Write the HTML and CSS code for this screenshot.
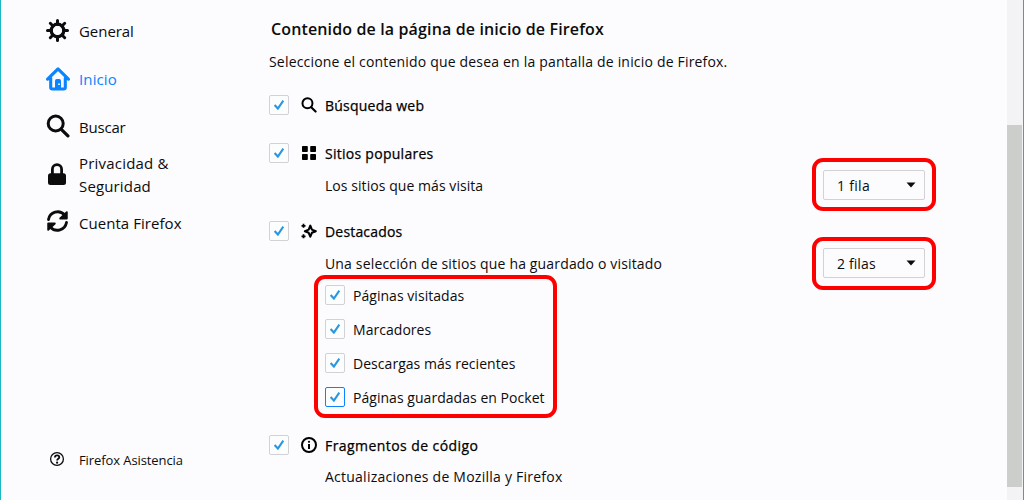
FILE: index.html
```
<!DOCTYPE html>
<html lang="es">
<head>
<meta charset="utf-8">
<title>Preferencias</title>
<link rel="stylesheet" href="styles.css">
</head>
<body>
<svg class="defs" width="0" height="0" aria-hidden="true">
  <symbol id="check" viewBox="0 0 18 18"><path d="M4.600 9 7.900 12.500 13.300 4.700" fill="none" stroke="#2996df" stroke-width="2.100"/></symbol>
  <symbol id="search" viewBox="0 0 24 24"><circle cx="9.700" cy="9.500" r="7.500" fill="none" stroke="currentColor" stroke-width="3"/><path d="m15.300 15.300 6.600 6.600" stroke="currentColor" stroke-width="3.200" stroke-linecap="round"/></symbol>
</svg>
<div class="window">
  <nav class="sidebar">
    <a class="item"><svg class="nav-icon" viewBox="0 0 24 24"><circle cx="11.500" cy="11.500" r="6.300" fill="none" stroke="currentColor" stroke-width="3.200"/><path d="M11.500 1.500v4M11.500 17.500v4M1.500 11.500h4M17.500 11.500h4M4.300 4.300l2.700 2.700M16 16l2.700 2.700M4.300 18.700 7 16M16 7l2.700-2.700" stroke="currentColor" stroke-width="3" stroke-linecap="round"/></svg><span class="general">General</span></a>
    <a class="item active"><svg class="nav-icon" viewBox="0 0 24 24"><path d="M1.600 12.200 12 1.900l10.400 10.300M4.700 11v9.300q0 1.700 1.700 1.700h11.200q1.700 0 1.700-1.700V11" fill="none" stroke="currentColor" stroke-width="3.100" stroke-linecap="round" stroke-linejoin="round"/><path d="M9 22v-8.200q0-1.800 1.800-1.800h2.400q1.800 0 1.800 1.800V22z" fill="currentColor"/><circle cx="13" cy="17.200" r=".9" fill="#fcfbfe"/></svg><span class="inicio">Inicio</span></a>
    <a class="item"><svg class="nav-icon search-icon"><use href="#search"/></svg><span class="buscar">Buscar</span></a>
    <a class="item tall"><svg class="nav-icon" viewBox="0 0 24 24"><rect x="2" y="10.300" width="18" height="11.700" rx="2.500" fill="currentColor"/><path d="M6.400 12V6.200a4.600 4.600 0 0 1 9.200 0V12" fill="none" stroke="currentColor" stroke-width="2.800"/></svg><span><span class="privacidad">Privacidad &amp;</span><br><span class="seguridad">Seguridad</span></span></a>
    <a class="item account"><svg class="nav-icon" viewBox="0 0 24 24"><path d="M2.500 10.500A9.300 9.300 0 0 1 18.500 5.800M20.500 13.500A9.300 9.300 0 0 1 4.500 18.200" fill="none" stroke="currentColor" stroke-width="2.800" stroke-linecap="round"/><path d="M20.800 3.200v6.300h-6.600zM2.200 20.800v-6.300h6.600z" fill="currentColor" stroke="currentColor" stroke-width="1.900" stroke-linejoin="round"/></svg><span class="cuenta">Cuenta Firefox</span></a>
    <a class="support"><svg class="help-icon" viewBox="0 0 16 16"><circle cx="8" cy="8" r="6.400" fill="none" stroke="currentColor" stroke-width="1.300"/><path d="M5.900 6.500c0-2.800 4.400-2.800 4.400-.3 0 1.500-2.200 1.600-2.200 3.200" fill="none" stroke="currentColor" stroke-width="1.800"/><circle cx="8.100" cy="11.700" r="1.100" fill="currentColor"/></svg><span class="asistencia">Firefox Asistencia</span></a>
  </nav>
  <main class="content">
    <h1 class="title">Contenido de la página de inicio de Firefox</h1>
    <p class="intro">Seleccione el contenido que desea en la pantalla de inicio de Firefox.</p>
    <div class="option web"><svg class="box"><use href="#check"/></svg><svg class="icon"><use href="#search"/></svg><span class="strong busqueda">Búsqueda web</span></div>
    <div class="option sites"><svg class="box"><use href="#check"/></svg><svg class="icon" viewBox="0 0 16 16"><path d="M1.800 1H6q.8 0 .8.8v4.400q0 .8-.8.8H1.800Q1 7 1 6.200V1.800Q1 1 1.800 1zM10 1h4.200q.8 0 .8.8v4.400q0 .8-.8.8H10q-.8 0-.8-.8V1.800Q9.200 1 10 1zM1.800 9H6q.8 0 .8.8v4.400q0 .8-.8.8H1.800q-.8 0-.8-.8V9.800Q1 9 1.800 9zM10 9h4.200q.8 0 .8.8v4.400q0 .8-.8.8H10q-.8 0-.8-.8V9.800Q9.200 9 10 9z" fill="currentColor"/></svg><span class="strong sitios">Sitios populares</span></div>
    <div class="detail"><span class="visita">Los sitios que más visita</span><div class="select"><span class="fila">1 fila</span><svg class="arrow" viewBox="0 0 10 6"><path d="M.5.5h9L5 5.500z" fill="currentColor"/></svg></div></div>
    <div class="option highlights"><svg class="box"><use href="#check"/></svg><svg class="icon" viewBox="0 0 16 16"><path d="M9.300 2.700 10.900 6.600 14.800 8.200 10.900 9.800 9.300 13.700 7.700 9.800 3.900 8.200 7.700 6.600z" fill="none" stroke="currentColor" stroke-width="2.100" stroke-linejoin="round"/><path d="M2.500.800v4M.500 2.800h4M2.500 11.300v4M.500 13.300h4" stroke="currentColor" stroke-width="1.700"/></svg><span class="strong destacados">Destacados</span></div>
    <div class="detail"><span class="seleccion">Una selección de sitios que ha guardado o visitado</span><div class="select"><span class="filas">2 filas</span><svg class="arrow" viewBox="0 0 10 6"><path d="M.5.5h9L5 5.500z" fill="currentColor"/></svg></div></div>
    <div class="suboptions">
      <div class="suboption"><svg class="box"><use href="#check"/></svg><span>Páginas visitadas</span></div>
      <div class="suboption"><svg class="box"><use href="#check"/></svg><span>Marcadores</span></div>
      <div class="suboption"><svg class="box"><use href="#check"/></svg><span>Descargas más recientes</span></div>
      <div class="suboption"><svg class="box focused"><use href="#check"/></svg><span>Páginas guardadas en Pocket</span></div>
    </div>
    <div class="option snippets"><svg class="box"><use href="#check"/></svg><svg class="icon" viewBox="0 0 16 16"><circle cx="8" cy="8" r="7" fill="none" stroke="currentColor" stroke-width="2"/><path d="M8 7v5" stroke="currentColor" stroke-width="2"/><circle cx="8" cy="4.800" r="1.100" fill="currentColor"/></svg><span class="strong fragmentos">Fragmentos de código</span></div>
    <div class="detail last"><span class="actualizaciones">Actualizaciones de Mozilla y Firefox</span></div>
  </main>
  <div class="scrollbar"><div class="thumb"></div></div>
</div>
</body>
</html>
```
FILE: styles.css
```
*, *::after { box-sizing: border-box; }
body { margin: 0; background: #fcfbfe; color: #0c0c0d; font: 14px/22px "Open Sans", "Noto Sans", sans-serif; }
.defs { display: block; }
.window { display: flex; height: 500px; border-left: 1px solid #1ab8c4; border-right: 1px solid #35a9b1; overflow: hidden; }
span { white-space: nowrap; }
.sidebar { width: 268px; padding: 7px 0 0 45px; flex: none; }
.item { display: flex; align-items: center; gap: 9px; height: 48px; font-size: 15px; }
.item.active { color: #0a84ff; }
.item.tall { line-height: 23px; }
.item.account { height: 47px; }
.nav-icon { width: 24px; height: 24px; flex: none; }
.account .nav-icon { margin-bottom: 4px; }
.search-icon { margin-bottom: 2px; }
.general { letter-spacing: -.05px; }
.inicio { letter-spacing: .12px; }
.buscar { letter-spacing: -.2px; }
.privacidad { letter-spacing: .2px; }
.seguridad { letter-spacing: .15px; }
.cuenta { letter-spacing: .05px; }
.support { display: flex; align-items: center; height: 30px; margin-top: 199px; padding-left: 3px; gap: 14px; font-size: 13px; letter-spacing: -.09px; }
.help-icon { width: 16px; height: 16px; margin-bottom: 2px; }
.content { width: 738px; flex: none; padding-top: 13px; }
.title { margin: 0; padding-left: 2px; height: 32px; font-size: 16px; line-height: 32px; font-weight: 600; white-space: nowrap; letter-spacing: .135px; }
.intro { margin: 0; height: 32px; line-height: 34px; white-space: nowrap; letter-spacing: .185px; }
.option { display: flex; align-items: center; height: 32px; }
.option span, .suboption span, .detail span { padding-top: 2px; }
.web { margin-top: 12px; }
.sites { margin-top: 16px; }
.highlights { margin-top: 14px; }
.snippets { margin-top: 15px; }
.box { width: 20px; height: 20px; flex: none; border: 1px solid #d2d2d6; border-radius: 2px; background: #fcfefd; }
.box.focused { border-color: #0a84ff; }
.icon { width: 16px; height: 16px; margin: 0 8px 0 12px; color: #000; }
.strong { color: #000; -webkit-text-stroke: .25px #000; }
.busqueda { letter-spacing: .22px; }
.sitios { letter-spacing: .27px; }
.visita { letter-spacing: .06px; }
.destacados { letter-spacing: .18px; }
.seleccion { letter-spacing: .16px; }
.fragmentos { letter-spacing: .43px; }
.actualizaciones { letter-spacing: .24px; }
.fila { letter-spacing: .3px; }
.filas { letter-spacing: .12px; }
.detail { display: flex; align-items: center; justify-content: space-between; height: 32px; padding: 0 82px 0 56px; }
.last span { padding-top: 0; }
.select { position: relative; display: flex; align-items: center; justify-content: space-between; width: 102px; height: 30px; padding: 0 8px 0 13px; border: 1px solid #d2d2d6; border-radius: 2px; }
.select::after { content: ""; position: absolute; inset: -13px -12px -12px -12px; border: 4px solid #f00; border-radius: 11px; }
.highlights + .detail .select::after { inset: -12px -12px -13px -12px; }
.arrow { width: 10px; height: 6px; }
.suboptions { position: relative; margin: -1px 0 0 56px; letter-spacing: .04px; }
.suboptions::after { content: ""; position: absolute; left: -11px; top: -3px; width: 243px; height: 143px; border: 4px solid #f00; border-radius: 11px; }
.suboption { display: flex; align-items: center; gap: 8px; height: 34px; }
.scrollbar { width: 16px; flex: none; padding-top: 125px; background: #f3f2f5; }
.thumb { width: 15px; height: 362px; background: #cccecb; }
```
